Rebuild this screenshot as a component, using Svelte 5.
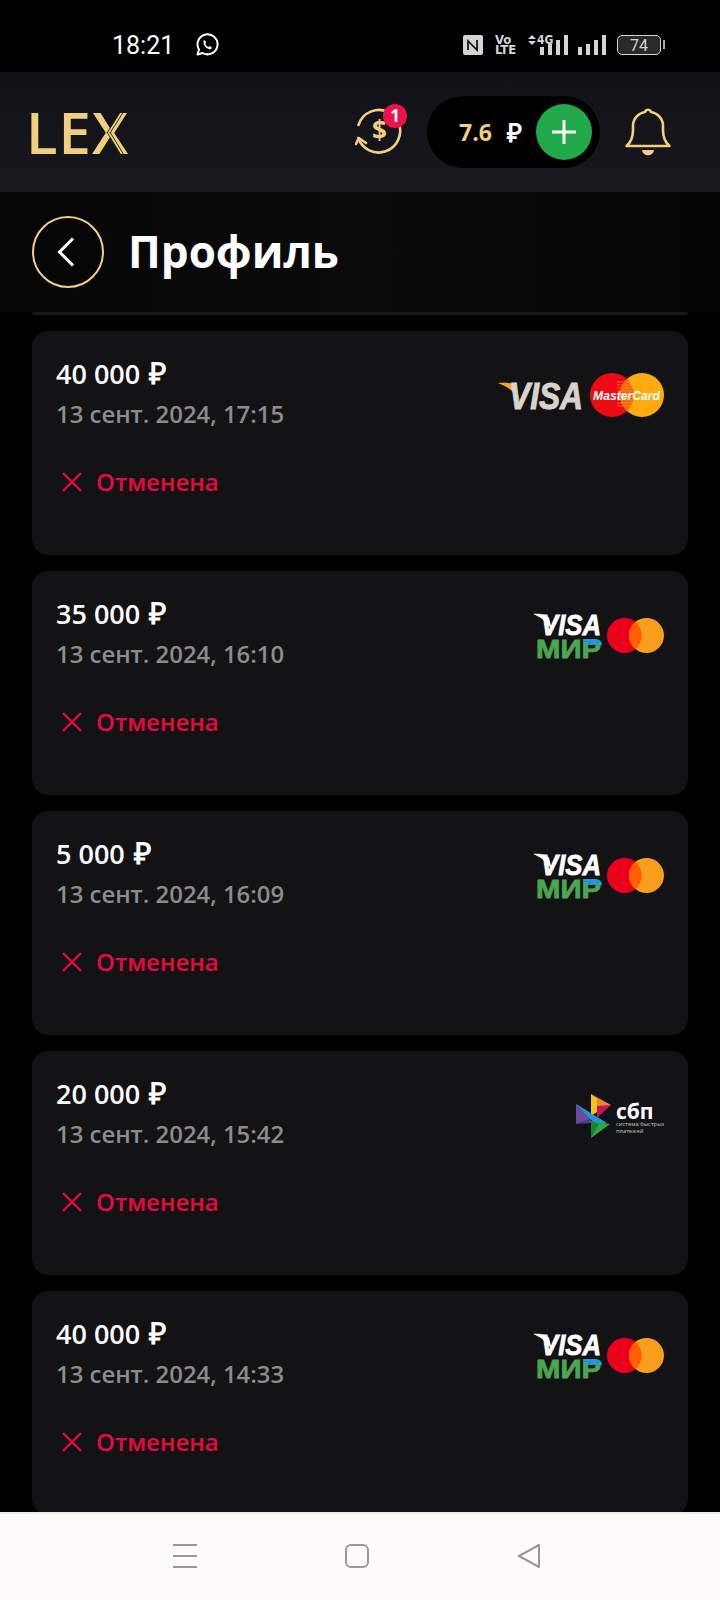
<script>
const payments = [
  { amount: "40 000", date: "13 сент. 2024, 17:15", logo: "classic" },
  { amount: "35 000", date: "13 сент. 2024, 16:10", logo: "mir" },
  { amount: "5 000", date: "13 сент. 2024, 16:09", logo: "mir" },
  { amount: "20 000", date: "13 сент. 2024, 15:42", logo: "sbp" },
  { amount: "40 000", date: "13 сент. 2024, 14:33", logo: "mir" }
];
const stripes = [26, 29, 32, 35, 38, 41, 44, 47, 50];
</script>

{#snippet classicLogo()}
  <svg class="logo" viewBox="0 0 180 88" width="180" height="88">
    <path d="M14 27 C22 26 30 27 32 30 L36 46 C32 36 24 31 14 27Z" fill="#f0a92a" />
    <text x="25" y="53" class="visa" font-size="36" textLength="74" lengthAdjust="spacingAndGlyphs" fill="#d9d4cb" stroke="#d9d4cb" stroke-width="1">VISA</text>
    <circle cx="128" cy="39" r="22" fill="#ee0a14" />
    <circle cx="158" cy="39" r="22" fill="#fdab0f" />
    <path d="M143 23 A22 22 0 0 1 143 55 A22 22 0 0 1 143 23Z" fill="#f5640f" />
    {#each stripes as y}
      <path d="M133 {y} H153" stroke="#f8b21c" stroke-width="1" opacity="0.5" />
    {/each}
    <text x="109" y="44" class="visa" font-size="12" textLength="67" lengthAdjust="spacingAndGlyphs" fill="#fff">MasterCard</text>
  </svg>
{/snippet}

{#snippet mirLogo()}
  <svg class="logo" viewBox="0 0 180 88" width="180" height="88">
    <path d="M49 18 C56 17 63 19 65 22 L68 34 C63 26 57 21 49 18Z" fill="#fff" />
    <text x="57" y="39" class="visa" font-size="29" textLength="60" lengthAdjust="spacingAndGlyphs" fill="#fff" stroke="#fff" stroke-width="0.8">VISA</text>
    <text x="52" y="62" class="mir" font-size="26" textLength="65" lengthAdjust="spacingAndGlyphs" fill="#4aa650" stroke="#4aa650" stroke-width="0.8">МИР</text>
    <path d="M99 43 H111 C115 43 118 45 118 49 H104 C102 48 100 45 99 43Z" fill="#1c9ad6" />
    <circle cx="140.5" cy="39.5" r="17.5" fill="#eb001b" />
    <circle cx="162.5" cy="39.5" r="17.5" fill="#f79e1b" />
    <path d="M151.5 26 A17.5 17.5 0 0 1 151.5 53 A17.5 17.5 0 0 1 151.5 26Z" fill="#ff5f00" />
  </svg>
{/snippet}

{#snippet sbpLogo()}
  <svg class="logo" viewBox="0 0 180 88" width="180" height="88">
    <path d="M107 18 L127 29 L113 36 L113 22 Z" fill="#f08a24" />
    <path d="M107 18 L113 22 L113 36 L107 40 Z" fill="#f6c21c" />
    <path d="M113 30 L127 29 L113 42 Z" fill="#c2185b" />
    <path d="M92 28 L107 38 L107 43 L92 48 Z" fill="#6a4a9e" />
    <path d="M92 48 L107 43 L107 47 Z" fill="#4f3f8f" />
    <path d="M92 28 L123 47 L110 47 Z" fill="#1c9ad6" />
    <path d="M107 45 L126 48 L107 62 Z" fill="#2aa84a" />
    <path d="M107 45 L115 48 L107 62 Z" fill="#1f7f3c" />
    <text x="132" y="43" class="sbp" font-size="21">сбп</text>
    <text x="132" y="50" class="sbp-sub" font-size="5.8">система быстрых</text>
    <text x="132" y="57" class="sbp-sub" font-size="5.8">платежей</text>
  </svg>
{/snippet}

<div class="phone">
  <div class="status">
    <span class="time">18:21</span>
    <svg class="wa" viewBox="0 0 24 24" width="24" height="24" fill="none" stroke="#fff" stroke-width="2">
      <path d="M2.5 21.5 L4 16.5 A10 10 0 1 1 7.6 20 Z" stroke-linejoin="round" />
      <path d="M8.5 7.5 C8 10 9 12.5 11 14.5 C13 16.2 15 16.8 16.5 16 L16.5 14 L14.5 13 L13.5 14 C12 13.5 10.8 12 10.2 10.5 L11.2 9.5 L10.2 7.4 Z" fill="#fff" stroke="none" />
    </svg>
    <div class="sys">
      <svg viewBox="0 0 20 20" width="20" height="20">
        <rect width="20" height="20" rx="2" fill="#d4d4d4" />
        <path d="M5 15 V6 L14 15 V5" fill="none" stroke="#000" stroke-width="1.6" />
      </svg>
      <div class="volte"><span>Vo</span><span>LTE</span></div>
      <svg class="arrows" viewBox="0 0 8 10" width="8" height="10" fill="#d4d4d4"><path d="M4 0 L8 4 H0 Z M0 6 H8 L4 10 Z" /></svg>
      <span class="fourg">4G</span>
      <svg viewBox="0 0 29 20" width="29" height="20" class="bars1" fill="#d4d4d4">
        <rect x="0" y="12" width="4" height="8" /><rect x="8" y="9" width="4" height="11" />
        <rect x="16" y="5" width="4" height="15" /><rect x="24" y="0" width="4" height="20" />
      </svg>
      <svg viewBox="0 0 29 20" width="29" height="20" fill="#d4d4d4">
        <rect x="0" y="12" width="4" height="8" /><rect x="8" y="9" width="4" height="11" />
        <rect x="16" y="5" width="4" height="15" /><rect x="24" y="0" width="4" height="20" />
      </svg>
      <div class="battery"><span>74</span></div>
    </div>
  </div>

  <header class="topbar">
    <div class="brand">
      <span>LEX</span>
      <svg class="x-cut" viewBox="0 0 40 44" width="40" height="44" fill="none" stroke="#14161b" stroke-width="0.9">
        <path d="M19 22 L33 0 M22 22 L36 0" />
        <path d="M19 21 L33 44 M22 21 L36 44" />
      </svg>
    </div>
    <div class="exchange">
      <svg viewBox="0 0 48 48" width="48" height="48" fill="none" stroke="#f0d07e" stroke-width="2.6" stroke-linecap="round" stroke-linejoin="round">
        <path d="M3.5 17 A21.5 21.5 0 0 1 35 5" />
        <path d="M44 16 A21.5 21.5 0 1 1 3.3 30" />
        <path d="M1 36 L3.8 30 L11 35" />
      </svg>
      <span class="dollar">$</span>
      <span class="badge">1</span>
    </div>
    <div class="balance">
      <span class="sum">7.6</span>
      <span class="rub">₽</span>
      <button class="plus" aria-label="Пополнить">
        <svg viewBox="0 0 24 24" width="24" height="24" stroke="#fff" stroke-width="3"><path d="M12 0 V24 M0 12 H24" /></svg>
      </button>
    </div>
    <svg class="bell" viewBox="0 0 46 48" width="46" height="48" fill="none" stroke="#f0d07e" stroke-width="2.6" stroke-linejoin="round">
      <path d="M1.5 38 C5 35 8 31 8 22 V18 C8 10 14 5 20 4 C21 1 25 1 26 4 C32 5 38 10 38 18 V22 C38 31 41 35 44.5 38 Z" />
      <path d="M17 42 H29 C28 49 18 49 17 42 Z" fill="#f0d07e" stroke="none" />
    </svg>
  </header>

  <div class="title-row">
    <button class="back" aria-label="Назад">
      <svg viewBox="0 0 18 30" width="18" height="30" fill="none" stroke="#fff" stroke-width="3"><path d="M16 1.5 L2.5 15 L16 28.5" /></svg>
    </button>
    <h1>Профиль</h1>
  </div>

  <main class="list">
    <div class="prev-card"></div>
    {#each payments as p}
      <section class="card">
        <div class="info">
          <div class="amount">{p.amount} <span class="cur">₽</span></div>
          <div class="date">{p.date}</div>
          <div class="state">
            <svg viewBox="0 0 20 20" width="20" height="20" stroke="#e8093f" stroke-width="2.4"><path d="M1 1 L19 19 M19 1 L1 19" /></svg>
            <span>Отменена</span>
          </div>
        </div>
        {#if p.logo === "classic"}
          {@render classicLogo()}
        {:else if p.logo === "mir"}
          {@render mirLogo()}
        {:else}
          {@render sbpLogo()}
        {/if}
      </section>
    {/each}
  </main>

  <nav class="navbar">
    <svg viewBox="0 0 24 24" width="24" height="24" stroke="#9a9796" stroke-width="2"><path d="M0 1 H24 M0 12 H24 M0 23 H24" /></svg>
    <svg viewBox="0 0 24 24" width="24" height="24" fill="none" stroke="#9a9796" stroke-width="2"><rect x="1" y="1" width="22" height="22" rx="5" /></svg>
    <svg viewBox="0 0 24 24" width="24" height="24" fill="none" stroke="#9a9796" stroke-width="2" stroke-linejoin="round"><path d="M22 1 V23 L2 12 Z" /></svg>
  </nav>
</div>

<style>
:global(body) {
  background: #000;
}

.phone {
  width: 720px;
  height: 1600px;
  display: flex;
  flex-direction: column;
  overflow: hidden;
  background: #000;
  font-family: "Open Sans", sans-serif;
  color: #fff;
}

.status {
  height: 72px;
  flex: none;
  display: flex;
  align-items: center;
  padding: 18px 59px 0 112px;
  box-sizing: border-box;
}

.time {
  font-family: Roboto, sans-serif;
  font-size: 25px;
  color: #fff;
}

.wa {
  margin-left: 21px;
}

.sys {
  margin-left: auto;
  display: flex;
  align-items: center;
  color: #d4d4d4;
}

.volte {
  display: flex;
  flex-direction: column;
  margin-left: 12px;
  font-family: "DejaVu Sans Condensed", "DejaVu Sans", sans-serif;
  font-size: 13px;
  line-height: 10px;
  font-weight: 700;
  width: 24px;
}

.arrows {
  margin-left: 9px;
  align-self: flex-start;
}

.fourg {
  align-self: flex-start;
  margin-left: 1px;
  margin-right: -13px;
  width: 16px;
  font-family: "DejaVu Sans Condensed", "DejaVu Sans", sans-serif;
  font-size: 12px;
  line-height: 10px;
  font-weight: 700;
}

.bars1 {
  margin-right: 9px;
}

.battery {
  width: 44px;
  height: 20px;
  margin-left: 10px;
  box-sizing: border-box;
  border: 1.5px solid #d4d4d4;
  border-radius: 5px;
  background: #2a2a2a;
  position: relative;
  display: flex;
  align-items: center;
  justify-content: center;
  font-family: Roboto, sans-serif;
  font-size: 16px;
}

.battery::after {
  content: "";
  position: absolute;
  right: -5px;
  top: 4px;
  width: 2px;
  height: 9px;
  background: #aaa;
}

.topbar {
  height: 120px;
  flex: none;
  display: flex;
  align-items: center;
  background: linear-gradient(#101217, #16181d);
  padding-left: 32px;
  box-sizing: border-box;
}

.brand {
  position: relative;
  width: 96px;
  margin-left: -6px;
  margin-right: 6px;
  font-family: "Open Sans", sans-serif;
  font-size: 58px;
  font-weight: 600;
  letter-spacing: 1px;
  line-height: 60px;
  color: #f0d07e;
}

.x-cut {
  position: absolute;
  left: 62px;
  top: 9px;
}

.exchange {
  position: relative;
  width: 48px;
  height: 48px;
  margin-left: 227px;
}

.exchange svg {
  display: block;
}

.dollar {
  position: absolute;
  left: 17px;
  top: 4px;
  font-size: 26px;
  line-height: 36px;
  font-weight: 700;
  color: #f0d07e;
}

.badge {
  position: absolute;
  left: 28px;
  top: -4px;
  width: 24px;
  height: 24px;
  border-radius: 50%;
  background: #f0104a;
  color: #fff;
  font-size: 17px;
  font-weight: 700;
  line-height: 24px;
  text-align: center;
}

.balance {
  width: 173px;
  height: 72px;
  margin-left: 24px;
  border-radius: 36px;
  background: #000;
  display: flex;
  align-items: center;
  padding-left: 32px;
  padding-right: 8px;
  box-sizing: border-box;
}

.sum {
  font-size: 23px;
  font-weight: 700;
  color: #f0d07e;
}

.rub {
  margin-left: 15px;
  font-size: 26px;
  line-height: 30px;
  font-weight: 700;
}

.plus {
  width: 56px;
  height: 56px;
  margin-left: auto;
  border: 0;
  padding: 0;
  border-radius: 50%;
  background: #21a84a;
  display: flex;
  align-items: center;
  justify-content: center;
}

.bell {
  margin-left: 25px;
}

.title-row {
  height: 120px;
  flex: none;
  display: flex;
  align-items: center;
  padding-left: 32px;
  box-sizing: border-box;
  background: linear-gradient(90deg, #050505, #0b0b0b 50%, #040404);
}

.back {
  width: 72px;
  height: 72px;
  padding: 0;
  border: 2px solid #f0d07e;
  border-radius: 50%;
  background: none;
  display: flex;
  align-items: center;
  justify-content: center;
}

.back svg {
  margin-right: 4px;
}

h1 {
  margin: -2px 0 0 24px;
  font-size: 44px;
  font-weight: 700;
  color: #fff;
}

.list {
  flex: 1;
  min-height: 0;
  overflow: hidden;
  padding: 0 32px;
}

.prev-card {
  height: 3px;
  margin-bottom: 16px;
  background: #17181a;
  border-radius: 0 0 8px 8px;
}

.card {
  height: 224px;
  margin-bottom: 16px;
  box-sizing: border-box;
  padding: 24px 24px 0 24px;
  border-radius: 16px;
  background: #131315;
  display: flex;
  justify-content: space-between;
  align-items: flex-start;
}

.amount {
  font-size: 27px;
  line-height: 37px;
  font-weight: 600;
  color: #fff;
}

.cur {
  margin-left: 2px;
  font-size: 30px;
  line-height: 30px;
  font-weight: 700;
}

.date {
  margin-top: 4px;
  font-size: 23.9px;
  line-height: 36px;
  font-weight: 600;
  color: #8c8c8c;
}

.state {
  margin-top: 32px;
  margin-left: 6px;
  display: flex;
  align-items: center;
  gap: 14px;
  font-size: 24px;
  line-height: 36px;
  font-weight: 600;
  color: #e8093f;
}

.logo {
  display: block;
  flex: none;
  margin-top: 1px;
}

.visa {
  font-family: "Liberation Sans", sans-serif;
  font-weight: 700;
  font-style: italic;
}

.mir {
  font-family: "Liberation Sans", sans-serif;
  font-weight: 700;
}

.sbp {
  font-family: "Open Sans", sans-serif;
  font-weight: 700;
  fill: #fff;
}

.sbp-sub {
  font-family: "Open Sans", sans-serif;
  fill: #c8c8c8;
}

.navbar {
  height: 88px;
  flex: none;
  box-sizing: border-box;
  border-top: 2px solid #f6e8e0;
  background: #fffbfa;
  display: flex;
  align-items: center;
  padding-left: 173px;
  padding-bottom: 2px;
  gap: 148px;
}
</style>
